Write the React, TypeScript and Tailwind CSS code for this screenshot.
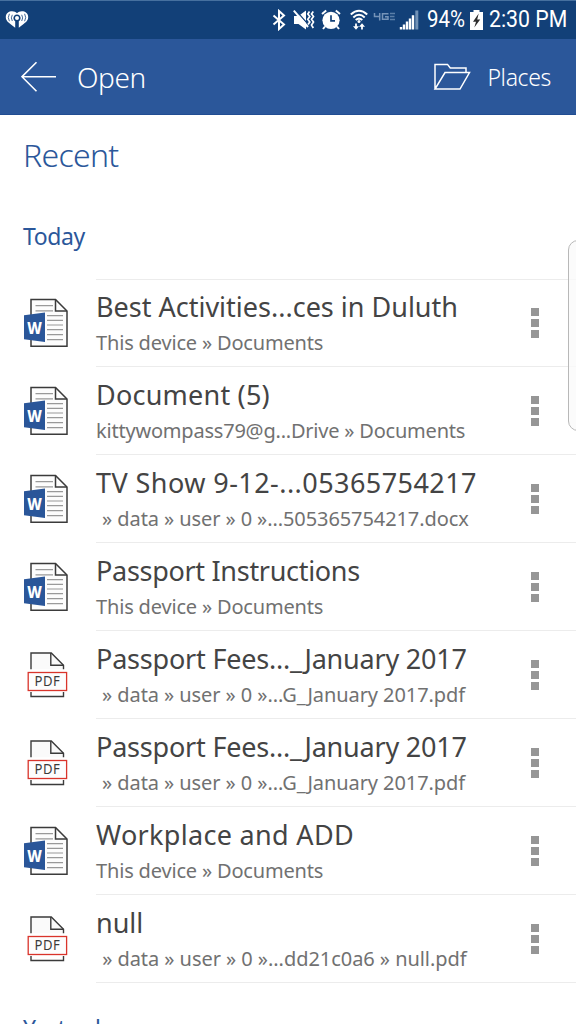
import type { ReactNode } from "react";

type FileKind = "word" | "pdf";

interface RecentFile {
  kind: FileKind;
  name: string;
  path: string;
  nameClass: string;
  pathClass: string;
}

const recentFiles: RecentFile[] = [
  {
    kind: "word",
    name: "Best Activities...ces in Duluth",
    path: "This device » Documents",
    nameClass: "tracking-normal",
    pathClass: "tracking-[-0.17px]"
  },
  {
    kind: "word",
    name: "Document (5)",
    path: "kittywompass79@g...Drive » Documents",
    nameClass: "tracking-[0.22px]",
    pathClass: "tracking-[-0.21px]"
  },
  {
    kind: "word",
    name: "TV Show 9-12-...05365754217",
    path: " » data » user » 0 »...505365754217.docx",
    nameClass: "tracking-[0.44px]",
    pathClass: "pl-px tracking-[-0.09px]"
  },
  {
    kind: "word",
    name: "Passport Instructions",
    path: "This device » Documents",
    nameClass: "tracking-[-0.3px]",
    pathClass: "tracking-[-0.17px]"
  },
  {
    kind: "pdf",
    name: "Passport Fees..._January 2017",
    path: " » data » user » 0 »...G_January 2017.pdf",
    nameClass: "tracking-[-0.2px]",
    pathClass: "pl-px tracking-[-0.08px]"
  },
  {
    kind: "pdf",
    name: "Passport Fees..._January 2017",
    path: " » data » user » 0 »...G_January 2017.pdf",
    nameClass: "tracking-[-0.2px]",
    pathClass: "pl-px tracking-[-0.08px]"
  },
  {
    kind: "word",
    name: "Workplace and ADD",
    path: "This device » Documents",
    nameClass: "tracking-[0.32px]",
    pathClass: "tracking-[-0.17px]"
  },
  {
    kind: "pdf",
    name: "null",
    path: " » data » user » 0 »...dd21c0a6 » null.pdf",
    nameClass: "tracking-normal",
    pathClass: "pl-px tracking-[-0.05px]"
  }
];

function WordIcon() {
  return (
    <svg width="48" height="52" viewBox="0 0 48 52" className="shrink-0">
      <path d="M9 2.5H33.5L45 14V49.3H9Z" fill="#fdfdfd" stroke="#3b3b3b" strokeWidth="1.5" />
      <path d="M33.5 2.5V14H45" fill="none" stroke="#3b3b3b" strokeWidth="1.5" />
      <path
        d="M13.5 8.6H31M13.5 13.9H31M25 18.6H41M25 23.4H41M25 28H41M25 32.6H41M25 37.6H41M25 42.6H41"
        stroke="#9a9a9a"
        strokeWidth="1.2"
      />
      <path d="M2 18.3L23 15.6V45L2 42.3Z" fill="#2a5699" />
      <text
        x="5.2"
        y="36.6"
        textLength="14.6"
        lengthAdjust="spacingAndGlyphs"
        fontFamily="Noto Sans, sans-serif"
        fontWeight="800"
        fontSize="16.5"
        fill="#fff"
      >
        W
      </text>
    </svg>
  );
}

function PdfIcon() {
  return (
    <svg width="48" height="52" viewBox="0 0 48 52" className="shrink-0">
      <path d="M9 20.2V4H29.3L41.5 16.2V20.2" fill="#fafafa" stroke="#3b3b3b" strokeWidth="1.4" />
      <path d="M28.8 4V16.3H41.5" fill="none" stroke="#3b3b3b" strokeWidth="1.4" />
      <path d="M9 43V47.5H41.5V43" fill="none" stroke="#3b3b3b" strokeWidth="1.4" />
      <rect x="6.2" y="23.5" width="38.4" height="18" fill="#fdfdfd" stroke="#d9342b" strokeWidth="1.3" />
      <text
        x="12.4"
        y="37.2"
        textLength="26"
        lengthAdjust="spacingAndGlyphs"
        fontFamily="Noto Sans, sans-serif"
        fontSize="13.5"
        letterSpacing="0.6"
        fill="#3b3b3b"
      >
        PDF
      </text>
    </svg>
  );
}

function MoreIcon() {
  return (
    <div className="flex flex-col gap-[3px]">
      <div className="size-2 bg-[#969696]" />
      <div className="size-2 bg-[#969696]" />
      <div className="size-2 bg-[#969696]" />
    </div>
  );
}

function StatusGlyph({ width, className, children }: { width: number; className: string; children: ReactNode }) {
  return (
    <svg width={width} height="22" viewBox={`0 0 ${width} 22`} className={`shrink-0 ${className}`} fill="none">
      {children}
    </svg>
  );
}

function StatusBar() {
  return (
    <div className="flex h-[39px] items-center border-t border-[#46709f] bg-[#124078] font-[Roboto,sans-serif] text-[23.5px] text-white">
      <StatusGlyph width={24} className="ml-[5px]">
        <path
          d="M12 4.2C9.5 1 0.8 1.2 0.8 8.3C0.8 13 6 15 10.2 18.8V12.2A3.6 3.6 0 1 1 13.8 12.2V18.8C18 15 23.2 13 23.2 8.3C23.2 1.2 14.5 1 12 4.2Z"
          fill="#fff"
        />
        <circle cx="12" cy="9" r="2" fill="#fff" />
        <path
          d="M7.3 5.8Q5.4 8.8 7.3 12M4.4 4.8Q2.2 8.6 4.4 12.2M16.7 5.8Q18.6 8.8 16.7 12M19.6 4.8Q21.8 8.6 19.6 12.2"
          stroke="#124078"
          strokeWidth="0.8"
        />
      </StatusGlyph>
      <div className="flex-1" />
      <StatusGlyph width={14} className="">
        <path d="M1.5 6.5L12 15.5L7 20V2L12 6.5L1.5 15.5" stroke="#fff" strokeWidth="2" />
      </StatusGlyph>
      <StatusGlyph width={22} className="ml-[7px]">
        <path d="M1 7H5.5L13 1.5V20.5L5.5 15H1Z" fill="#fff" />
        <path d="M2 0.5L17 17.5" stroke="#124078" strokeWidth="1.2" />
        <path d="M0.8 1.7L15 18" stroke="#fff" strokeWidth="2" />
        <path
          d="M16.5 2.5L14.8 5L16.8 7.5L14.8 10.3L16.8 13L15 15.5M20.3 2.5L18.5 5L20.5 7.5L18.5 10.3L20.5 13L18.5 16L20.3 19"
          stroke="#fff"
          strokeWidth="1.7"
        />
      </StatusGlyph>
      <StatusGlyph width={20} className="ml-[6px]">
        <circle cx="10" cy="11.3" r="8.6" fill="#fff" />
        <path d="M1 5L5.2 1.5M19 5L14.8 1.5M4 17.5L2 20M16 17.5L18 20" stroke="#fff" strokeWidth="2" />
        <path d="M10 6.3V11.8H14" stroke="#124078" strokeWidth="1.7" />
      </StatusGlyph>
      <StatusGlyph width={18} className="ml-[9px]">
        <path d="M0.8 5.6Q9-2 17.2 5.6M3.3 8.4Q9 3.2 14.7 8.4M5.7 11Q9 8.2 12.3 11" stroke="#fff" strokeWidth="2" />
        <circle cx="9" cy="12.4" r="1.5" fill="#fff" />
        <path d="M6 14.5V18M12 20.6V17" stroke="#fff" strokeWidth="1.8" />
        <path d="M3 17.2H9L6 20.8ZM9 17.8H15L12 14.2Z" fill="#fff" />
      </StatusGlyph>
      <StatusGlyph width={24} className="ml-[5px]">
        <path d="M1.5 4V7.5H7.5M6.7 4V11.5M15.5 4.8H9.5V10.3H15V7.7H12" stroke="#7593b8" strokeWidth="1.5" />
        <path d="M17 4.5H22M17 7.5H21.5M17 10.5H22" stroke="#5b7fa9" strokeWidth="1.4" />
      </StatusGlyph>
      <StatusGlyph width={20} className="ml-[2px]">
        <path d="M2 18V20.5M5 15.5V20.5M8 12.5V20.5M11 9.5V20.5M14 6.3V20.5" stroke="#fff" strokeWidth="2.4" />
        <path d="M17.8 1.5V20.5" stroke="#7292b6" strokeWidth="3" />
      </StatusGlyph>
      <span className="ml-[8px] w-[38px] origin-left scale-x-[0.87] whitespace-nowrap leading-none">94%</span>
      <StatusGlyph width={13} className="ml-[5px]">
        <path d="M0 3H3.5V1H9.5V3H13V21H0Z" fill="#fff" />
        <path d="M8.7 4.5L3 12.7H6L4.3 18.5L10.2 10.5H7.2Z" fill="#2d2d2d" />
      </StatusGlyph>
      <span className="mr-[9px] ml-[6px] w-[78px] origin-left scale-x-[0.905] whitespace-nowrap leading-none">2:30 PM</span>
    </div>
  );
}

function AppBar() {
  return (
    <header className="flex h-[76px] items-center border-b border-[#214d92] bg-[#2b579a] text-white">
      <svg width="36" height="32" viewBox="0 0 36 32" fill="none" className="ml-[21px]">
        <path d="M35 15.7H1M15.5 1.2L1 15.7L15.5 30.2" stroke="#fff" strokeWidth="1.6" />
      </svg>
      <h1 className="ml-5 text-[28px] font-light tracking-[-0.4px]">Open</h1>
      <div className="flex-1" />
      <svg width="38" height="28" viewBox="0 0 38 28" fill="none">
        <path d="M2 26V1.4H14.5L17.3 5H33V9.5M2 26H27L36.5 9.5H12L2 26Z" stroke="#fff" strokeWidth="1.5" />
      </svg>
      <span className="mr-[25px] ml-4 pt-[2px] text-[23px] font-[350] tracking-[-0.35px]">Places</span>
    </header>
  );
}

function FileRow({ file }: { file: RecentFile }) {
  return (
    <li className="flex h-[88px] pl-[22px]">
      <div className="w-[74px] shrink-0 pt-[18px]">{file.kind === "word" ? <WordIcon /> : <PdfIcon />}</div>
      <div className="flex flex-1 border-b border-[#ececec]">
        <div className="flex-1 whitespace-pre pt-2">
          <div className={`text-[27px] leading-10 text-[#444] ${file.nameClass}`}>{file.name}</div>
          <div className={`text-[20px] leading-8 text-[#717171] ${file.pathClass}`}>{file.path}</div>
        </div>
        <div className="pt-[29px] pr-[37px]">
          <MoreIcon />
        </div>
      </div>
    </li>
  );
}

export default function App() {
  return (
    <div className="relative h-[1024px] w-[576px] overflow-hidden bg-white font-['Noto_Sans','Open_Sans',sans-serif]">
      <StatusBar />
      <AppBar />
      <main>
        <h2 className="pt-[18px] pl-[23px] text-[32px] leading-[44px] font-light tracking-[-0.7px] text-[#2b579a]">Recent</h2>
        <h3 className="pt-[43px] pl-[23px] text-[23px] leading-8 tracking-[-0.4px] text-[#2b579a]">Today</h3>
        <div className="mt-[27px] ml-24 h-px bg-[#ececec]" />
        <ul className="-mt-px">
          {recentFiles.map((file, index) => (
            <FileRow key={index} file={file} />
          ))}
        </ul>
        <h3 className="pt-[29px] pl-[23px] text-[23px] leading-8 tracking-[-0.4px] text-[#2b579a]">Yesterday</h3>
      </main>
      <div className="absolute top-[240px] -right-3 h-[191px] w-5 rounded-[10px] border border-[#b8b8b8] bg-[#fafafa]/80" />
    </div>
  );
}
